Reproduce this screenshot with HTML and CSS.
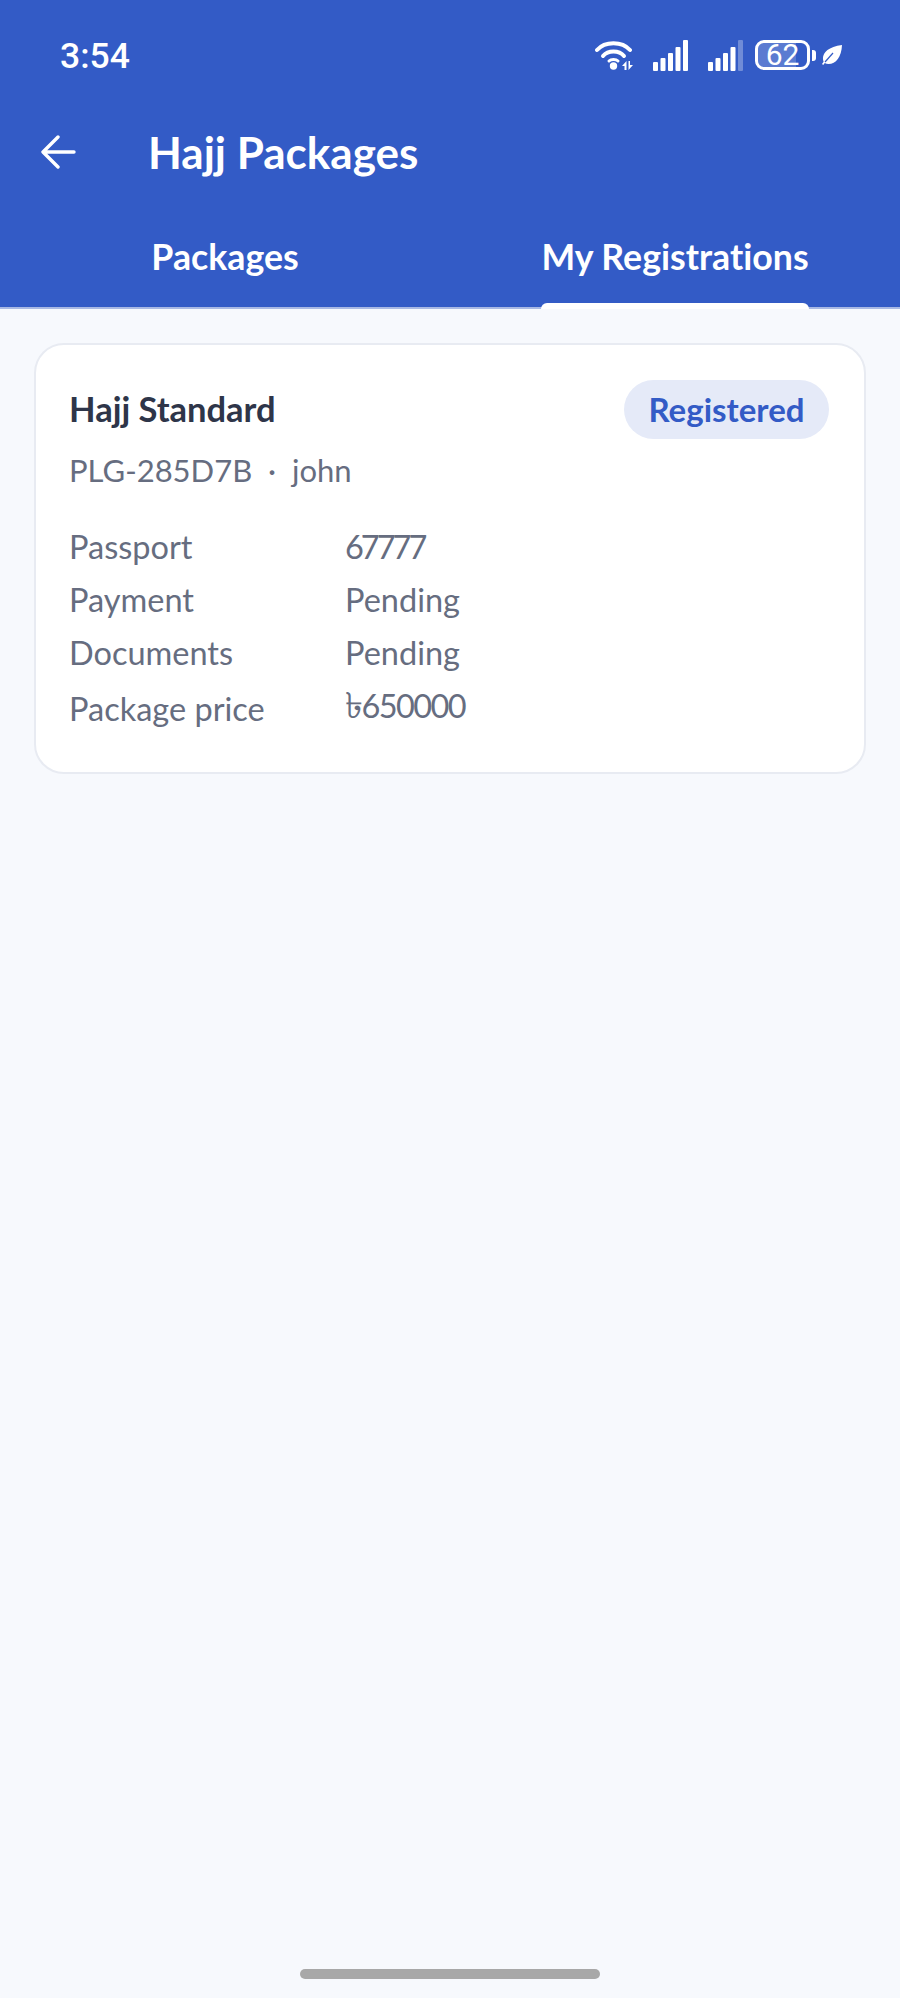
FILE: index.html
```html
<!DOCTYPE html>
<html lang="en">
<head>
  <meta charset="UTF-8">
  <meta name="viewport" content="width=device-width, initial-scale=1.0">
  <title>Hajj Packages</title>
  <link rel="stylesheet" href="styles.css">
</head>
<body>
  <div class="app">
    <header class="header">
      <!-- Status bar -->
      <div class="status-bar">
        <span class="time">3:54</span>
        <div class="status-icons">
          <svg width="38" height="30" viewBox="0 0 38 30">
            <path d="M2 10 C10 1 27 1 35 10" fill="none" stroke="#fff" stroke-width="4" stroke-linecap="round"/>
            <path d="M8 16 C13 10 24 10 29 16" fill="none" stroke="#fff" stroke-width="4" stroke-linecap="round"/>
            <path d="M14 21 C16 19 21 19 23 21" fill="none" stroke="#fff" stroke-width="3" stroke-linecap="round"/>
            <circle cx="18.5" cy="26" r="3.7" fill="#fff"/>
            <path d="M31.5 21 V30 H29.5 V26 H27 Z M33.5 21 H35 V25 H38 L33.5 30 Z" fill="#fff"/>
          </svg>
          <svg width="35" height="31" viewBox="0 0 35 31">
            <rect x="0" y="22" width="5" height="9" rx="1" fill="#fff"/>
            <rect x="7.5" y="18" width="5" height="13" rx="1" fill="#fff"/>
            <rect x="15" y="13" width="5" height="18" rx="1" fill="#fff"/>
            <rect x="22.5" y="7" width="5" height="24" rx="1" fill="#fff"/>
            <rect x="30" y="0" width="5" height="31" rx="1" fill="#fff"/>
          </svg>
          <svg width="35" height="31" viewBox="0 0 35 31">
            <rect x="0" y="22" width="5" height="9" rx="1" fill="#fff"/>
            <rect x="7.5" y="18" width="5" height="13" rx="1" fill="#fff"/>
            <rect x="15" y="13" width="5" height="18" rx="1" fill="#fff"/>
            <rect x="22.5" y="7" width="5" height="24" rx="1" fill="#fff"/>
            <rect x="30" y="0" width="5" height="31" rx="1" fill="#fff" fill-opacity="0.3"/>
          </svg>
          <div class="battery">
            <span class="battery-body">62</span>
            <span class="battery-tip"></span>
          </div>
          <svg class="icon-leaf" width="20" height="20" viewBox="0 0 20 20">
            <path d="M20 0 C19.5 12 14 19 6.5 19 C5 19 3.8 18.6 2.8 18 L1.2 20 L0 19 L1.6 16.8 C-1 10 4 2 20 0 Z" fill="#fff"/>
            <path d="M3 17 L11 8" fill="none" stroke="#335bc6" stroke-width="1.2"/>
          </svg>
        </div>
      </div>

      <!-- Title -->
      <div class="toolbar">
        <svg class="back" width="36" height="34" viewBox="0 0 36 34">
          <path d="M33 17 H3 M17 2 L2 17 L17 32" fill="none" stroke="#fff" stroke-width="3.4" stroke-linecap="round" stroke-linejoin="round"/>
        </svg>
        <h1 class="title">Hajj Packages</h1>
      </div>

      <!-- Tabs -->
      <nav class="tabs">
        <div class="tab"><span class="tab-label">Packages</span></div>
        <div class="tab tab-active"><span class="tab-label">My Registrations</span></div>
      </nav>
    </header>

    <main class="content">
      <section class="card">
        <div class="card-top">
          <h2 class="card-title">Hajj Standard</h2>
          <span class="badge">Registered</span>
        </div>
        <p class="card-sub">PLG-285D7B &nbsp;·&nbsp; john</p>
        <dl class="details">
          <dt>Passport</dt><dd class="passport">67777</dd>
          <dt>Payment</dt><dd>Pending</dd>
          <dt>Documents</dt><dd>Pending</dd>
          <dt class="price-label">Package price</dt><dd class="price"><span class="taka">৳</span>650000</dd>
        </dl>
      </section>
    </main>

    <div class="home-bar"></div>
  </div>
</body>
</html>
```

FILE: styles.css
```css
/* App Styles */
* {
  box-sizing: border-box;
}

body {
  margin: 0;
  padding: 0;
  font-family: Lato, "Noto Sans", sans-serif;
  font-variant-ligatures: none;
  background-color: #f7f9fd;
}

.app {
  width: 900px;
  height: 1998px;
  display: flex;
  flex-direction: column;
}

.header {
  height: 309px;
  background-color: #335bc6;
  border-bottom: 2px solid #a9b9e4;
  color: #fff;
}

.status-bar {
  height: 110px;
  padding: 0 58px 0 60px;
  display: flex;
  justify-content: space-between;
  align-items: center;
}

.time {
  padding-top: 2px;
  font-family: Roboto, sans-serif;
  font-size: 35.5px;
  font-weight: 500;
  line-height: 40px;
}

.status-icons {
  display: flex;
  align-items: center;
  gap: 20px;
}

.battery {
  display: flex;
  align-items: center;
  gap: 2px;
  margin-left: -8px;
}

.battery-body {
  position: relative;
  width: 55px;
  height: 30px;
  border: 3px solid #fff;
  border-radius: 9px;
  font-family: Roboto, sans-serif;
  font-size: 30px;
  line-height: 24px;
  text-align: center;
}

.battery-body::before {
  content: "";
  position: absolute;
  left: 0;
  top: 0;
  bottom: 0;
  width: 38px;
  background: rgba(255, 255, 255, 0.2);
  border-radius: 6px 0 0 6px;
}

.battery-tip {
  width: 4px;
  height: 11px;
  background: #fff;
  border-radius: 0 3px 3px 0;
}

.icon-leaf {
  margin-left: -14px;
}

.toolbar {
  height: 84px;
  padding-left: 41px;
  display: flex;
  align-items: center;
}

.back {
  flex: none;
}

.title {
  margin: 0 0 0 71px;
  font-size: 44px;
  font-weight: 700;
}

.tabs {
  height: 113px;
  display: flex;
}

.tab {
  flex: 1;
  display: flex;
  justify-content: center;
}

.tab-label {
  position: relative;
  height: 100%;
  padding-top: 41px;
  font-size: 35.7px;
  font-weight: 700;
}

.tab-active .tab-label::after {
  content: "";
  position: absolute;
  left: 0;
  right: 0;
  bottom: -2px;
  height: 6px;
  background: #fff;
  border-radius: 6px 6px 0 0;
}

.content {
  flex: 1;
  padding: 34px 34px 0;
}

.card {
  height: 431px;
  padding: 35px 35px 0 33px;
  background: #fff;
  border: 2px solid #e8ebf2;
  border-radius: 30px;
}

.card-top {
  display: flex;
  justify-content: space-between;
  align-items: center;
}

.card-title {
  margin: 0;
  padding-bottom: 2px;
  font-size: 34.5px;
  font-weight: 700;
  color: #2e3549;
}

.badge {
  width: 205px;
  height: 59px;
  background: #e5eaf8;
  border-radius: 30px;
  color: #335bc6;
  font-size: 33px;
  font-weight: 700;
  line-height: 58px;
  text-align: center;
}

.card-sub {
  margin: 11px 0 0;
  font-size: 31px;
  line-height: 40px;
  color: #666d80;
}

.details {
  margin: 37px 0 0;
  display: grid;
  grid-template-columns: 276px 1fr;
  row-gap: 13px;
  font-size: 32.5px;
  line-height: 40px;
  color: #666d80;
}

.details dt,
.details dd {
  margin: 0;
}

.details .price-label {
  margin-top: 3px;
}

.details .passport {
  letter-spacing: -3px;
}

.details .price {
  letter-spacing: -1.6px;
}

.taka {
  font-size: 36px;
  line-height: 0;
}

.home-bar {
  width: 300px;
  height: 10px;
  margin: 0 auto 19px;
  background: #a8a8a8;
  border-radius: 5px;
}
```
